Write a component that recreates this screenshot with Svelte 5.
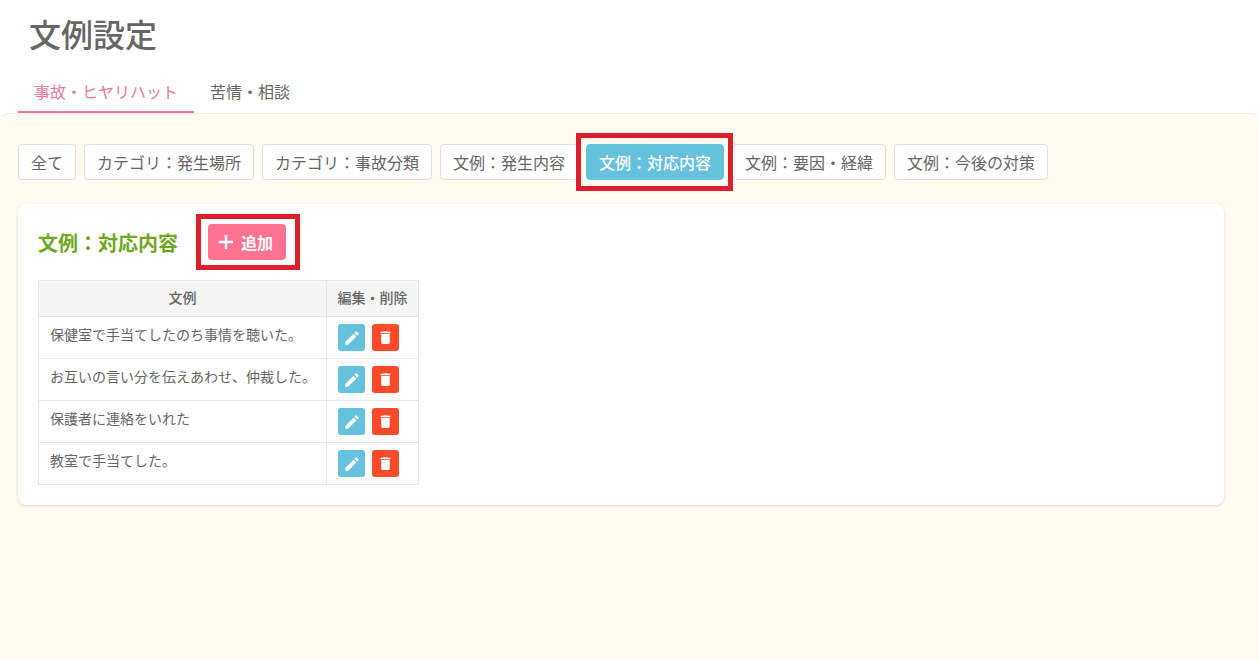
<script>
  const filters = [
    { label: '全て' },
    { label: 'カテゴリ：発生場所' },
    { label: 'カテゴリ：事故分類' },
    { label: '文例：発生内容' },
    { label: '文例：対応内容', active: true },
    { label: '文例：要因・経緯' },
    { label: '文例：今後の対策' }
  ];

  const rows = [
    '保健室で手当てしたのち事情を聴いた。',
    'お互いの言い分を伝えあわせ、仲裁した。',
    '保護者に連絡をいれた',
    '教室で手当てした。'
  ];
</script>

<header>
  <h1>文例設定</h1>
  <nav>
    <a href="#top" class="tab current">事故・ヒヤリハット</a>
    <a href="#top" class="tab">苦情・相談</a>
  </nav>
</header>

<main>
  <div class="filters">
    {#each filters as f}
      <button class="filter" class:active={f.active}>{f.label}</button>
    {/each}
  </div>

  <section class="card">
    <div class="card-head">
      <h2>文例：対応内容</h2>
      <button class="add">
        <svg width="16" height="16" viewBox="0 0 16 16" aria-hidden="true">
          <path d="M8 1v14M1 8h14" stroke="#fff" stroke-width="2.4" fill="none" />
        </svg>
        追加
      </button>
    </div>

    <table>
      <thead>
        <tr>
          <th class="text-col">文例</th>
          <th class="action-col">編集・削除</th>
        </tr>
      </thead>
      <tbody>
        {#each rows as row}
          <tr>
            <td class="text-cell">{row}</td>
            <td class="action-cell">
              <div class="actions">
                <button class="icon edit" aria-label="編集">
                  <svg width="18" height="18" viewBox="0 0 24 24" fill="#fff">
                    <path d="M3 17.25V21h3.75L17.81 9.94l-3.75-3.75L3 17.25zM20.71 7.04a1 1 0 0 0 0-1.41l-2.34-2.34a1 1 0 0 0-1.41 0l-1.83 1.83 3.75 3.75 1.83-1.83z" />
                  </svg>
                </button>
                <button class="icon trash" aria-label="削除">
                  <svg width="17" height="17" viewBox="0 0 24 24" fill="#fff">
                    <path d="M6 19c0 1.1.9 2 2 2h8c1.1 0 2-.9 2-2V7H6v12zM19 4h-3.5l-1-1h-5l-1 1H5v2h14V4z" />
                  </svg>
                </button>
              </div>
            </td>
          </tr>
        {/each}
      </tbody>
    </table>
  </section>
</main>

<style>
  :global(body) {
    background-color: #fff;
    color: #666;
    font-family: 'Noto Sans CJK JP', 'Noto Sans', sans-serif;
  }

  header {
    height: 113px;
    box-sizing: border-box;
    padding: 0 18px;
    display: flex;
    flex-direction: column;
    justify-content: flex-end;
  }

  h1 {
    margin: 0 0 17px 11px;
    font-size: 32px;
    line-height: 46px;
    font-weight: 500;
    color: #666;
  }

  nav {
    display: flex;
  }

  .tab {
    height: 40px;
    box-sizing: border-box;
    padding: 0 16px 2px;
    display: flex;
    align-items: center;
    font-size: 16px;
    color: #666;
    text-decoration: none;
    border-bottom: 2px solid transparent;
  }

  .tab.current {
    color: #e8799a;
    border-bottom-color: #e8799a;
  }

  main {
    min-height: 547px;
    box-sizing: border-box;
    padding: 30px 35px 0 18px;
    background-color: #fffbf0;
    border-top: 1px solid #f0eee6;
    border-radius: 8px 8px 0 0;
  }

  .filters {
    display: flex;
    gap: 8px;
    margin-bottom: 24px;
  }

  button {
    font-family: inherit;
    cursor: pointer;
  }

  .filter {
    height: 36px;
    padding: 0 12px;
    background-color: #fff;
    border: 1px solid #ddd;
    border-radius: 4px;
    color: #666;
    font-size: 16px;
    white-space: nowrap;
  }

  .filter.active {
    position: relative;
    background-color: #65c1de;
    border-color: #65c1de;
    color: #fff;
    font-weight: 500;
  }

  /* red callouts drawn over the screenshot */
  .filter.active::after {
    content: '';
    position: absolute;
    inset: -12px -10px -12px -11px;
    border: 5px solid #dc1f2a;
  }

  .card {
    background-color: #fff;
    border-radius: 8px;
    box-shadow: 0 1px 3px rgba(0, 0, 0, 0.15);
    padding: 20px;
    height: 301px;
    box-sizing: border-box;
  }

  .card-head {
    display: flex;
    align-items: flex-start;
    gap: 30px;
    margin-bottom: 19px;
  }

  h2 {
    margin: 1px 0 0;
    font-size: 20px;
    line-height: 36px;
    font-weight: 700;
    color: #6fa81e;
  }

  .add {
    position: relative;
    width: 78px;
    height: 36px;
    padding: 0 0 0 10px;
    display: flex;
    align-items: center;
    gap: 7px;
    background-color: #ff7391;
    border: 0;
    border-radius: 4px;
    color: #fff;
    font-size: 16px;
    font-weight: 700;
  }

  .add::after {
    content: '';
    position: absolute;
    inset: -10px -14px -10px -12px;
    border: 5px solid #dc1f2a;
  }

  table {
    border-collapse: collapse;
    table-layout: fixed;
    width: 381px;
    font-size: 14px;
  }

  th,
  td {
    box-sizing: border-box;
    border: 1px solid #e6e6e6;
    padding: 0;
  }

  th {
    height: 36px;
    padding-bottom: 3px;
    background-color: #f5f5f5;
    font-size: 14px;
    font-weight: 500;
    color: #666;
    text-align: center;
  }

  .text-col {
    width: 288px;
  }

  td {
    height: 42px;
  }

  .text-cell {
    padding: 0 11px 8px;
    line-height: 20px;
    white-space: nowrap;
    color: #666;
  }

  .actions {
    display: flex;
    gap: 7px;
    padding-left: 11px;
  }

  .icon {
    width: 27px;
    height: 27px;
    padding: 0;
    display: flex;
    align-items: center;
    justify-content: center;
    border: 0;
    border-radius: 3px;
  }

  .edit {
    background-color: #65c1de;
  }

  .trash {
    background-color: #fa4a2a;
  }
</style>
